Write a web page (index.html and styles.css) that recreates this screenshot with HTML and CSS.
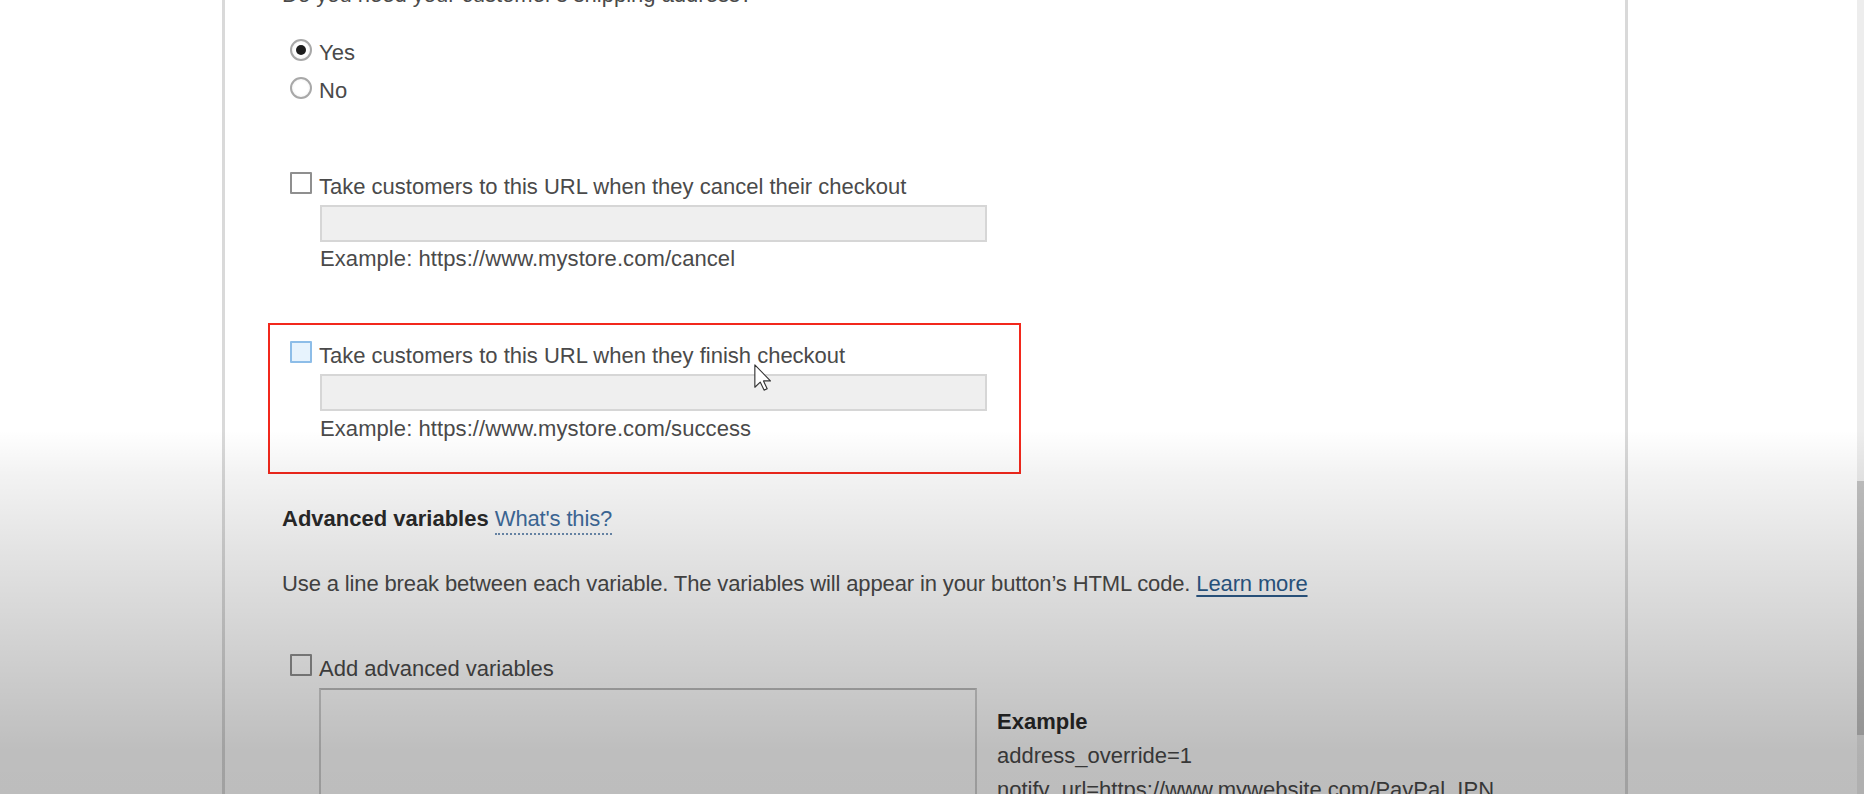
FILE: index.html
```html
<!DOCTYPE html>
<html lang="en">
<head>
<meta charset="utf-8">
<title>Checkout settings</title>
<link rel="stylesheet" href="styles.css">
</head>
<body>
<div class="page">
  <div class="gutter"></div>
  <main class="panel">
    <div class="content">
      <p class="question">Do you need your customer's shipping address?</p>
      <div class="radios">
        <label class="opt"><span class="radio checked"></span><span>Yes</span></label>
        <label class="opt"><span class="radio"></span><span>No</span></label>
      </div>
      <div class="url-group first">
        <label class="opt"><span class="check"></span><span>Take customers to this URL when they cancel their checkout</span></label>
        <div class="field"></div>
        <p class="hint">Example: https://www.mystore.com/cancel</p>
      </div>
      <div class="highlight">
        <div class="url-group">
          <label class="opt"><span class="check hover"></span><span>Take customers to this URL when they finish checkout</span></label>
          <div class="field"></div>
          <p class="hint">Example: https://www.mystore.com/success</p>
        </div>
      </div>
      <h3 class="adv">Advanced variables <a class="whats">What's this?</a></h3>
      <p class="desc">Use a line break between each variable. The variables will appear in your button’s HTML code. <a class="learn">Learn more</a></p>
      <label class="opt add"><span class="check"></span><span>Add advanced variables</span></label>
      <div class="vars">
        <div class="textarea"></div>
        <div class="example">
          <p class="ex-title">Example</p>
          <p>address_override=1</p>
          <p>notify_url=https://www.mywebsite.com/PayPal_IPN</p>
        </div>
      </div>
    </div>
  </main>
  <div class="spacer"></div>
  <div class="scrollbar"><div class="thumb"></div></div>
</div>
<div class="shade"></div>
<svg class="cursor" viewBox="0 0 12 19" xmlns="http://www.w3.org/2000/svg">
  <path d="M0.6,0.6 L0.6,16.4 L4.4,12.7 L7.1,18.4 L9.3,17.5 L6.7,11.9 L11.6,11.9 Z" fill="#fff" stroke="#333" stroke-width="0.8" stroke-linejoin="round"/>
</svg>
</body>
</html>
```
FILE: styles.css
```css
html, body {
  margin: 0;
  padding: 0;
}
body {
  position: relative;
  width: 1864px;
  height: 794px;
  overflow: hidden;
  background: #fff;
  font-family: "Liberation Sans", Arial, sans-serif;
  font-size: 22px;
  line-height: 26px;
  color: #4a4a4a;
}
p, h3 {
  margin: 0;
}
.page {
  display: flex;
  height: 794px;
}
.gutter {
  width: 222px;
  flex: none;
}
.panel {
  flex: none;
  width: 1406px;
  box-sizing: border-box;
  border-left: 3px solid #d9d9d9;
  border-right: 3px solid #d9d9d9;
  padding-left: 57px;
  overflow: hidden;
}
.spacer {
  flex: 1;
}
.scrollbar {
  width: 7px;
  flex: none;
  background: #ededed;
  display: flex;
  flex-direction: column;
}
.thumb {
  margin-top: 481px;
  height: 254px;
  background: #c4c4c4;
}
.content {
  display: flex;
  flex-direction: column;
  align-items: flex-start;
}
.question {
  margin-top: -18px;
}
.radios {
  margin-top: 32px;
  display: flex;
  flex-direction: column;
  gap: 12px;
}
.opt {
  display: flex;
  align-items: flex-start;
  height: 26px;
  white-space: nowrap;
}
.radio, .check {
  flex: none;
  width: 22px;
  height: 22px;
  box-sizing: border-box;
  margin: -1px 7px 0 8px;
}
.radio {
  border-radius: 50%;
  border: 2px solid #a8a8a8;
  background: radial-gradient(circle, #fff 50%, #ebebeb 100%);
  display: grid;
  place-items: center;
}
.radio.checked::after {
  content: "";
  width: 10px;
  height: 10px;
  border-radius: 50%;
  background: #1c1c1c;
}
.check {
  margin-top: -2px;
  border: 2px solid #8f8f8f;
  border-radius: 1px;
  background: #fff;
}
.check.hover {
  border-color: #8dbde8;
  background: #e7f3fd;
}
.url-group.first {
  margin-top: 70px;
}
.field {
  margin: 5px 0 0 38px;
  width: 667px;
  height: 37px;
  box-sizing: border-box;
  border: 2px solid #d6d6d6;
  background: #efefef;
}
.hint {
  margin: 4px 0 0 38px;
  letter-spacing: 0.08px;
}
.highlight {
  margin: 51px 0 0 -14px;
  width: 753px;
  box-sizing: border-box;
  border: 2px solid #f2281c;
  padding: 18px 0 30px 12px;
}
.highlight .hint {
  margin-top: 5px;
}
.adv {
  margin-top: 32px;
  font-size: 22px;
  line-height: 26px;
  font-weight: bold;
  color: #2a2a2a;
}
.whats {
  font-weight: normal;
  color: #3f6d9e;
  text-decoration: none;
  border-bottom: 2px dotted #6f8fb3;
  padding-bottom: 2px;
  letter-spacing: -0.15px;
}
.desc {
  margin-top: 39px;
  white-space: nowrap;
  letter-spacing: -0.13px;
}
.learn {
  color: #2d5c8c;
  text-decoration: underline;
  text-underline-offset: 4px;
}
.add {
  margin-top: 59px;
}
.vars {
  display: flex;
  margin-top: 6px;
}
.textarea {
  flex: none;
  margin-left: 37px;
  width: 658px;
  height: 200px;
  box-sizing: border-box;
  border: 2px solid #d0d0d0;
  border-top-color: #bcbcbc;
}
.example {
  margin-left: 20px;
  padding-top: 17px;
  line-height: 34px;
  white-space: nowrap;
}
.ex-title {
  font-weight: bold;
  color: #2a2a2a;
}
.shade {
  position: absolute;
  inset: 0;
  pointer-events: none;
  background: linear-gradient(to bottom,
    rgba(0,0,0,0) 0px,
    rgba(0,0,0,0) 430px,
    rgba(0,0,0,0.05) 476px,
    rgba(0,0,0,0.114) 557px,
    rgba(0,0,0,0.19) 658px,
    rgba(0,0,0,0.255) 750px,
    rgba(0,0,0,0.26) 794px);
}
.cursor {
  position: absolute;
  left: 754px;
  top: 364px;
  width: 17px;
  height: 27px;
}
```
